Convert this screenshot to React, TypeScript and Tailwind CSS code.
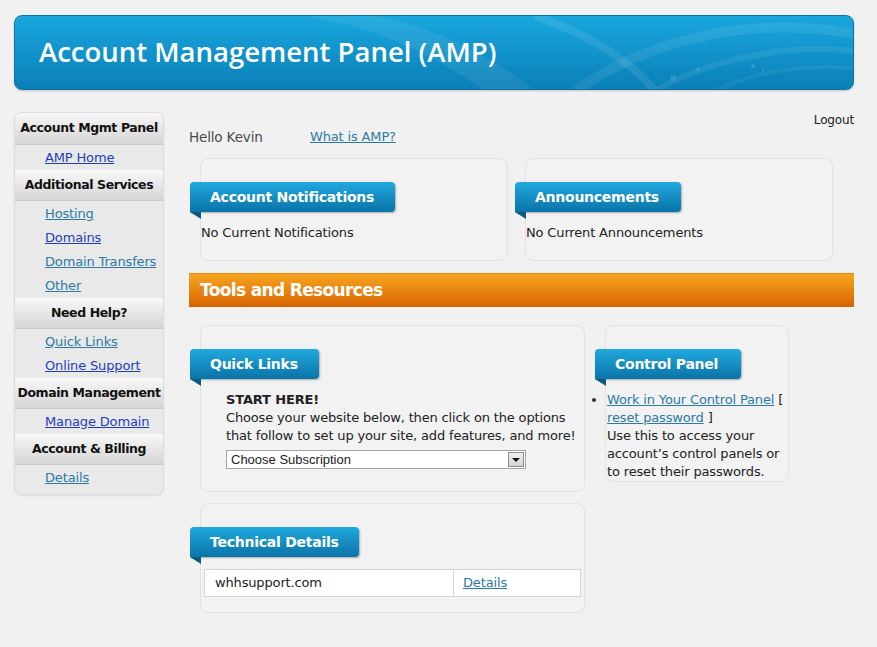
import React from "react";

const V = "font-['DejaVu_Sans',Verdana,sans-serif]";
const blue = "text-[#1f3dbd] underline";
const teal = "text-[#2a7ba3] underline";

function Tab({ label, w }: { label: string; w: string }) {
  return (
    <div className={`relative -ml-[11px] ${w}`}>
      <div className="h-[30px] rounded-[4px] rounded-bl-none bg-linear-to-b from-[#20a9de] to-[#0a74a8] pl-5 text-[14px] font-bold leading-[30px] tracking-[-0.25px] text-white shadow-[1px_1px_2px_rgba(0,0,0,0.3)] whitespace-nowrap">
        {label}
      </div>
      <div className="absolute left-0 top-full h-0 w-0 border-l-[11px] border-t-[7px] border-l-transparent border-t-[#0b5a80]" />
    </div>
  );
}

function SideHead({ children, first }: { children: React.ReactNode; first?: boolean }) {
  return (
    <div
      className={`${first ? "h-[31px] rounded-t-[7px]" : "h-[29px]"} box-content flex items-center justify-center border-b border-[#c9c9c9] bg-linear-to-b from-[#f7f7f7] to-[#d6d6d6] text-[12.5px] font-bold tracking-[-0.4px] text-[#111] whitespace-nowrap`}
    >
      {children}
    </div>
  );
}

function SideLinks({ links }: { links: [string, boolean][] }) {
  return (
    <div className="border-b border-[#f7f7f7] pt-[1px]">
      {links.map(([t, b]) => (
        <div key={t} className="h-6 pl-[30px] text-[13px] leading-6">
          <a className={b ? blue : teal}>{t}</a>
        </div>
      ))}
    </div>
  );
}

export default function App() {
  return (
    <div className={`min-h-[647px] bg-[#f1f1f1] pl-[14px] pt-[15px] ${V} tracking-[-0.15px] text-[#222]`}>
      <div className="w-[840px]">
        {/* Header */}
        <div className="relative h-[75px] overflow-hidden rounded-[8px] border border-[#0b76a6] bg-linear-to-b from-[#19a7de] to-[#0a7fb7] shadow-[0_1px_2px_rgba(0,0,0,0.2)]">
          <svg className="absolute inset-0" width="840" height="75" viewBox="0 0 840 75">
            <path d="M290,0 C360,10 420,40 470,75 L520,75 C470,35 410,8 360,0 Z" fill="#ffffff" opacity="0.07" />
            <path d="M520,0 C580,20 620,50 640,75" stroke="#ffffff" strokeOpacity="0.09" strokeWidth="8" fill="none" />
            <path d="M560,75 C640,20 740,0 840,18" stroke="#ffffff" strokeOpacity="0.08" strokeWidth="10" fill="none" />
            <path d="M640,75 C700,40 780,28 840,35" stroke="#ffffff" strokeOpacity="0.08" strokeWidth="6" fill="none" />
            <path d="M700,75 C740,55 790,48 840,52" stroke="#ffffff" strokeOpacity="0.06" strokeWidth="4" fill="none" />
            <circle cx="658" cy="62" r="3" fill="#ffffff" opacity="0.12" />
            <circle cx="683" cy="54" r="1.5" fill="#ffffff" opacity="0.16" />
            <circle cx="738" cy="50" r="2" fill="#ffffff" opacity="0.14" />
            <circle cx="748" cy="54" r="1.2" fill="#ffffff" opacity="0.16" />
          </svg>
          <h1 className="relative pl-[24px] pt-[18px] font-['Open_Sans',sans-serif] text-[27.5px] font-semibold leading-[36px] tracking-normal text-white">
            Account Management Panel (AMP)
          </h1>
        </div>

        <div className="mt-[22px] flex items-start">
          {/* Sidebar */}
          <aside className="w-[150px] rounded-[8px] border border-[#dcdcdc] bg-[#e9e9e9] pb-[4px] shadow-[0_1px_2px_rgba(0,0,0,0.08)]">
            <SideHead first>Account Mgmt Panel</SideHead>
            <SideLinks links={[["AMP Home", true]]} />
            <SideHead>Additional Services</SideHead>
            <SideLinks
              links={[
                ["Hosting", false],
                ["Domains", true],
                ["Domain Transfers", false],
                ["Other", false],
              ]}
            />
            <SideHead>Need Help?</SideHead>
            <SideLinks
              links={[
                ["Quick Links", false],
                ["Online Support", true],
              ]}
            />
            <SideHead>Domain Management</SideHead>
            <SideLinks links={[["Manage Domain", true]]} />
            <SideHead>Account &amp; Billing</SideHead>
            <div className="pt-[1px]">
              <div className="h-6 pl-[30px] text-[13px] leading-6">
                <a className={teal}>Details</a>
              </div>
            </div>
          </aside>

          {/* Main */}
          <main className="ml-[25px] flex-1">
            <div className="h-4 text-right text-[12px] leading-4 text-[#222]">Logout</div>
            <div className="flex h-[18px] items-center text-[13px] leading-[18px]">
              <span className="w-[121px] text-[13.5px] text-[#4a4a4a]">Hello Kevin</span>
              <a className={teal}>What is AMP?</a>
            </div>

            <div className="mt-[12px] flex gap-[17px] pl-[11px]">
              <div className="w-[308px] rounded-[8px] border border-[#e2e2e2] bg-[#f2f2f2] pt-[23px] pb-[18px]">
                <Tab label="Account Notifications" w="w-[205px]" />
                <div className="mt-[12px] text-[13px] leading-[18px]">No Current Notifications</div>
              </div>
              <div className="w-[308px] rounded-[8px] border border-[#e2e2e2] bg-[#f2f2f2] pt-[23px] pb-[18px]">
                <Tab label="Announcements" w="w-[166px]" />
                <div className="mt-[12px] text-[13px] leading-[18px]">No Current Announcements</div>
              </div>
            </div>

            <div className="mt-[12px] h-[34px] border-t border-[#e38a10] bg-linear-to-b from-[#f7a51f] to-[#d76300] pl-[11px] text-[17px] font-bold leading-[33px] tracking-[-0.65px] text-white">
              Tools and Resources
            </div>

            <div className="mt-[18px] flex items-start gap-[20px] pl-[11px]">
              <div className="w-[385px]">
                <div className="rounded-[8px] border border-[#e2e2e2] bg-[#f2f2f2] pt-[23px] pb-[22px]">
                  <Tab label="Quick Links" w="w-[129px]" />
                  <div className="mt-[12px] pl-[25px] text-[13px] leading-[18px] whitespace-nowrap">
                    <div className="font-bold">START HERE!</div>
                    <div>Choose your website below, then click on the options</div>
                    <div>that follow to set up your site, add features, and more!</div>
                    <div className="mt-[5px] flex h-[19px] w-[300px] items-center border border-[#a3a3a3] bg-white font-['Liberation_Sans',Arial,sans-serif] text-[13px] tracking-normal">
                      <span className="flex-1 pl-[4px] leading-[17px]">Choose Subscription</span>
                      <span className="mr-[1px] flex h-[15px] w-[16px] items-center justify-center border border-[#8a8a8a] bg-linear-to-b from-[#f0f0f0] to-[#d4d4d4]">
                        <span className="h-0 w-0 border-x-[4px] border-t-[4px] border-x-transparent border-t-[#111]" />
                      </span>
                    </div>
                  </div>
                </div>

                <div className="mt-[11px] rounded-[8px] border border-[#e2e2e2] bg-[#f2f2f2] pt-[23px] pb-[15px]">
                  <Tab label="Technical Details" w="w-[169px]" />
                  <div className="mx-[3px] mt-[12px] flex h-[28px] border border-[#d6d6d6] bg-white text-[13px] leading-[26px]">
                    <div className="w-[249px] border-r border-[#d6d6d6] pl-[10px]">whhsupport.com</div>
                    <div className="pl-[9px]">
                      <a className={teal}>Details</a>
                    </div>
                  </div>
                </div>
              </div>

              <div className="w-[184px] rounded-[8px] border border-[#e2e2e2] bg-[#f2f2f2] pt-[23px]">
                <Tab label="Control Panel" w="w-[146px]" />
                <ul className="mt-[12px] list-disc pl-[1px] text-[13px] leading-[18px] whitespace-nowrap">
                  <li className="list-outside marker:text-[#333]">
                    <a className={teal}>Work in Your Control Panel</a> [
                    <br />
                    <a className={teal}>reset password</a> ]
                    <br />
                    Use this to access your
                    <br />
                    account’s control panels or
                    <br />
                    to reset their passwords.
                  </li>
                </ul>
              </div>
            </div>
          </main>
        </div>
      </div>
    </div>
  );
}
